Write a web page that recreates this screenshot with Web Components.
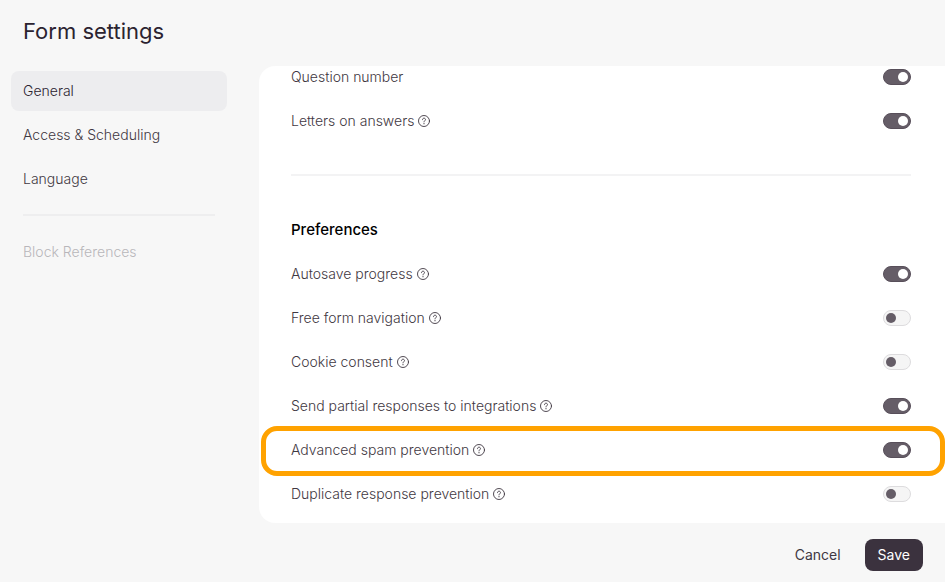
<!DOCTYPE html>
<html lang="en">
<head>
	<meta charset="utf-8">
	<meta name="viewport" content="width=device-width, initial-scale=1">
	<title>Form settings</title>
	<style>
		:root {
			--ink: #2b2330;
			--ink-soft: #3f3842;
			--accent: #655d67;
			--surface: #f7f7f7;
			--line: #f3f3f4;
		}

		body {
			margin: 0;
			background: var(--surface);
			color: var(--ink-soft);
			font: 300 14px/20px Inter, "Liberation Sans", sans-serif;
		}
	</style>
</head>
<body>
<settings-dialog heading="Form settings">
	<settings-nav slot="nav">
		<nav-item href="#general" current>General</nav-item>
		<nav-item href="#access">Access &amp; Scheduling</nav-item>
		<nav-item href="#language">Language</nav-item>
		<settings-divider inset></settings-divider>
		<nav-item disabled>Block References</nav-item>
	</settings-nav>

	<settings-section>
		<setting-row checked>Question number</setting-row>
		<setting-row checked help>Letters on answers</setting-row>
	</settings-section>
	<settings-divider></settings-divider>
	<settings-section heading="Preferences">
		<setting-row checked help>Autosave progress</setting-row>
		<setting-row help>Free form navigation</setting-row>
		<setting-row help>Cookie consent</setting-row>
		<setting-row checked help>Send partial responses to integrations</setting-row>
		<setting-row checked help highlight>Advanced spam prevention</setting-row>
		<setting-row help>Duplicate response prevention</setting-row>
	</settings-section>

	<action-button slot="actions">Cancel</action-button>
	<action-button slot="actions" primary>Save</action-button>
</settings-dialog>

<script>
	class BaseElement extends HTMLElement {
		connectedCallback() {
			if (this.shadowRoot) return;
			this.attachShadow({ mode: 'open' });
			this.shadowRoot.innerHTML = `<style>${this._css()}</style>${this._html()}`;
		}
	}

	class SettingsDialog extends BaseElement {
		_html() {
			return `
				<header><h1>${this.getAttribute('heading')}</h1></header>
				<div class="body">
					<slot name="nav"></slot>
					<main><div class="content"><slot></slot></div></main>
				</div>
				<footer><slot name="actions"></slot></footer>
			`;
		}

		_css() {
			return `
				:host {
					display: flex;
					flex-direction: column;
					height: 100vh;
				}

				header {
					padding: 15px 23px 19px;
				}

				h1 {
					margin: 0;
					color: var(--ink);
					font-size: 22px;
					font-weight: 400;
					line-height: 32px;
				}

				.body {
					display: flex;
					flex: 1;
					min-height: 0;
				}

				/* column-reverse keeps the list scrolled to its end */
				main {
					display: flex;
					flex-direction: column-reverse;
					flex: 1;
					min-width: 0;
					overflow: hidden auto;
					scrollbar-width: none;
					border-radius: 16px 0 0 16px;
					background: #fff;
				}

				.content {
					padding: 0 34px 7px 32px;
				}

				footer {
					display: flex;
					justify-content: flex-end;
					gap: 12px;
					padding: 16px 22px 11px;
				}
			`;
		}
	}

	class SettingsNav extends BaseElement {
		_html() {
			return `<nav aria-label="Settings"><slot></slot></nav>`;
		}

		_css() {
			return `
				:host {
					display: block;
					flex: none;
					width: 216px;
					padding: 5px 32px 0 11px;
				}

				nav {
					display: flex;
					flex-direction: column;
					gap: 4px;
				}
			`;
		}
	}

	class NavItem extends BaseElement {
		_html() {
			const href = this.hasAttribute('disabled') ? 'aria-disabled="true"' : `href="${this.getAttribute('href')}"`;
			const current = this.hasAttribute('current') ? 'aria-current="page"' : '';
			return `<a ${href} ${current}><slot></slot></a>`;
		}

		_css() {
			return `
				:host {
					display: block;
				}

				a {
					display: block;
					padding: 10px 12px;
					border-radius: 8px;
					color: inherit;
					text-decoration: none;
				}

				a[aria-current] {
					background: #ededef;
					color: var(--ink);
				}

				a[aria-disabled] {
					color: #b8b6ba;
				}
			`;
		}
	}

	class SettingsDivider extends BaseElement {
		_html() {
			return `<hr>`;
		}

		_css() {
			return `
				:host {
					display: block;
					padding: 31px 0 32px;
				}

				:host([inset]) {
					padding: 11px 12px 12px;
				}

				hr {
					height: 2px;
					margin: 0;
					border: 0;
					background: var(--line);
				}

				:host([inset]) hr {
					background: #eeeeef;
				}
			`;
		}
	}

	class SettingsSection extends BaseElement {
		_html() {
			const heading = this.getAttribute('heading');
			return `<section>${heading ? `<h2>${heading}</h2>` : ''}<slot></slot></section>`;
		}

		_css() {
			return `
				:host {
					display: block;
				}

				h2 {
					margin: 0;
					color: #000;
					font-size: 15px;
					font-weight: 500;
					line-height: 44px;
				}
			`;
		}
	}

	class SettingRow extends BaseElement {
		_html() {
			return `
				<label for="toggle"><slot></slot></label>
				${this.hasAttribute('help') ? this._helpHtml() : ''}
				<input id="toggle" type="checkbox" role="switch" ${this.hasAttribute('checked') ? 'checked' : ''}>
			`;
		}

		_helpHtml() {
			return `
				<button type="button" aria-label="Help">
					<svg width="12" height="12" viewBox="0 0 12 12" fill="none" stroke="currentColor" stroke-linecap="round">
						<circle cx="6" cy="6" r="5.5" stroke-width=".9"/>
						<path d="M4.5 4.7C4.5 3.8 5.1 3.2 6 3.2s1.5.6 1.5 1.4C7.5 5.6 6 5.7 6 6.9" stroke-width=".9"/>
						<circle cx="6" cy="8.7" r=".6" fill="currentColor" stroke="none"/>
					</svg>
				</button>
			`;
		}

		_css() {
			return `
				:host {
					position: relative;
					display: flex;
					align-items: center;
					gap: 4px;
					height: 44px;
				}

				/* callout ring drawn over the neighbouring rows */
				:host([highlight])::after {
					content: '';
					position: absolute;
					inset: -2px -34px -4px -30px;
					border: 5px solid #ffa200;
					border-radius: 16px;
					pointer-events: none;
				}

				button {
					display: flex;
					padding: 0;
					border: 0;
					background: none;
					color: inherit;
					cursor: pointer;
				}

				input {
					display: flex;
					align-items: center;
					flex: none;
					box-sizing: border-box;
					width: 28px;
					height: 16px;
					margin: 0 0 0 auto;
					padding: 0 2px;
					appearance: none;
					border: 1px solid #dddcde;
					border-radius: 8px;
					background: #f5f5f5;
					cursor: pointer;
				}

				input::before {
					content: '';
					width: 10px;
					height: 10px;
					border-radius: 50%;
					background: var(--accent);
				}

				input:checked {
					justify-content: flex-end;
					border-color: #584f5a;
					background: var(--accent);
				}

				input:checked::before {
					background: #fff;
				}
			`;
		}
	}

	class ActionButton extends BaseElement {
		_html() {
			return `<button type="button"><slot></slot></button>`;
		}

		_css() {
			return `
				:host {
					display: block;
				}

				button {
					padding: 6px 12px;
					border: 0;
					border-radius: 8px;
					background: none;
					color: inherit;
					font: inherit;
					font-weight: 400;
					cursor: pointer;
				}

				:host([primary]) button {
					padding: 6px 13px;
					background: #3b323e;
					color: #fff;
				}
			`;
		}
	}

	customElements.define('settings-dialog', SettingsDialog);
	customElements.define('settings-nav', SettingsNav);
	customElements.define('nav-item', NavItem);
	customElements.define('settings-divider', SettingsDivider);
	customElements.define('settings-section', SettingsSection);
	customElements.define('setting-row', SettingRow);
	customElements.define('action-button', ActionButton);
</script>
</body>
</html>
